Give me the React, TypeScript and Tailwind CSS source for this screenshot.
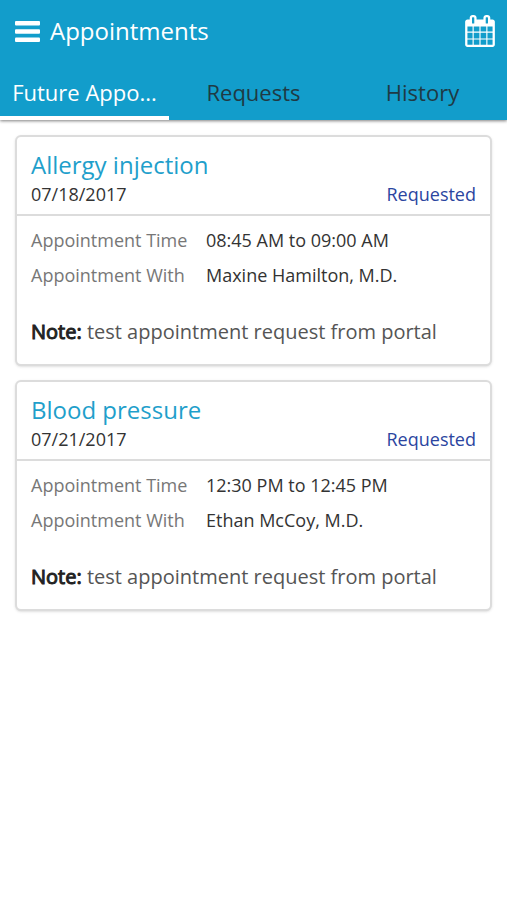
import React, { useState } from 'react';

const tabs = [
  { id: 'future', label: 'Future Appo...' },
  { id: 'requests', label: 'Requests' },
  { id: 'history', label: 'History' }
];

const appointments = [
  {
    id: 1,
    title: 'Allergy injection',
    date: '07/18/2017',
    status: 'Requested',
    time: '08:45 AM to 09:00 AM',
    provider: 'Maxine Hamilton, M.D.',
    note: 'test appointment request from portal'
  },
  {
    id: 2,
    title: 'Blood pressure',
    date: '07/21/2017',
    status: 'Requested',
    time: '12:30 PM to 12:45 PM',
    provider: 'Ethan McCoy, M.D.',
    note: 'test appointment request from portal'
  }
];

function MenuIcon() {
  return (
    <svg viewBox="0 0 25 21" className="w-[25px] h-[21px]" fill="currentColor" aria-hidden="true">
      <rect width="25" height="4.500" rx="1" />
      <rect y="8.200" width="25" height="4.500" rx="1" />
      <rect y="16.500" width="25" height="4.500" rx="1" />
    </svg>
  );
}

function CalendarIcon() {
  return (
    <svg viewBox="0 0 1664 1792" className="w-[30px] h-8" fill="currentColor" aria-hidden="true">
      <path d="M128 1664h288v-288h-288v288zm352 0h320v-288h-320v288zm-352-352h288v-320h-288v320zm352 0h320v-320h-320v320zm-352-384h288v-288h-288v288zm736 736h320v-288h-320v288zm-384-736h320v-288h-320v288zm768 736h288v-288h-288v288zm-384-352h320v-320h-320v320zm-352-864v-288q0-13-9.500-22.500t-22.500-9.500h-64q-13 0-22.500 9.500t-9.500 22.500v288q0 13 9.500 22.500t22.500 9.500h64q13 0 22.500-9.500t9.500-22.500zm736 864h288v-320h-288v320zm-384-384h320v-288h-320v288zm384 0h288v-288h-288v288zm32-480v-288q0-13-9.500-22.500t-22.500-9.500h-64q-13 0-22.500 9.500t-9.500 22.500v288q0 13 9.500 22.500t22.500 9.500h64q13 0 22.500-9.500t9.500-22.500zm384-64v1280q0 52-38 90t-90 38h-1408q-52 0-90-38t-38-90v-1280q0-52 38-90t90-38h128v-96q0-66 47-113t113-47h64q66 0 113 47t47 113v96h384v-96q0-66 47-113t113-47h64q66 0 113 47t47 113v96h128q52 0 90 38t38 90z" />
    </svg>
  );
}

export default function App() {
  const [activeTab, setActiveTab] = useState('future');

  return (
    <div className="min-h-screen bg-white font-['Open_Sans',sans-serif] text-[#333333]">
      {/* Header */}
      <header className="bg-[#129dcb] text-white shadow-[0_1px_3px_rgba(0,0,0,0.5)]">
        <div className="flex h-[62px] items-center justify-between pl-[15px] pr-3">
          <div className="flex items-center gap-[10px]">
            <button type="button" aria-label="Menu">
              <MenuIcon />
            </button>
            <h1 className="text-[24px] leading-8">Appointments</h1>
          </div>
          <button type="button" aria-label="Calendar">
            <CalendarIcon />
          </button>
        </div>

        <nav className="grid grid-cols-3">
          {tabs.map((tab) => (
            <button
              key={tab.id}
              type="button"
              onClick={() => setActiveTab(tab.id)}
              className={`h-[58px] border-b-4 pt-1.5 text-[22px] whitespace-nowrap ${
                activeTab === tab.id ? 'border-white text-white' : 'border-transparent text-[#1f3a44]'
              }`}
            >
              {tab.label}
            </button>
          ))}
        </nav>
      </header>

      {/* Appointment cards */}
      <main className="space-y-[14px] p-[15px]">
        {appointments.map((item) => (
          <article key={item.id} className="rounded-md border-2 border-[#dcdcdc] bg-white shadow-sm">
            <div className="border-b-2 border-[#dcdcdc] px-[14px] pt-3 pb-[7px]">
              <h2 className="text-[24px] leading-8 text-[#1f9fcb]">{item.title}</h2>
              <div className="flex justify-between text-[18px] leading-[26px]">
                <span>{item.date}</span>
                <span className="text-[#2b45a0]">{item.status}</span>
              </div>
            </div>

            <div className="px-[14px] pt-[7px] pb-[15px] text-[18px] leading-[35px]">
              <dl className="grid grid-cols-[175px_1fr]">
                <dt className="text-[#777777]">Appointment Time</dt>
                <dd>{item.time}</dd>
                <dt className="text-[#777777]">Appointment With</dt>
                <dd>{item.provider}</dd>
              </dl>
              <p className="mt-[21px] text-[20px] text-[#555555]">
                <strong className="font-normal text-[#222222] [-webkit-text-stroke:1px]">Note:</strong> {item.note}
              </p>
            </div>
          </article>
        ))}
      </main>
    </div>
  );
}
